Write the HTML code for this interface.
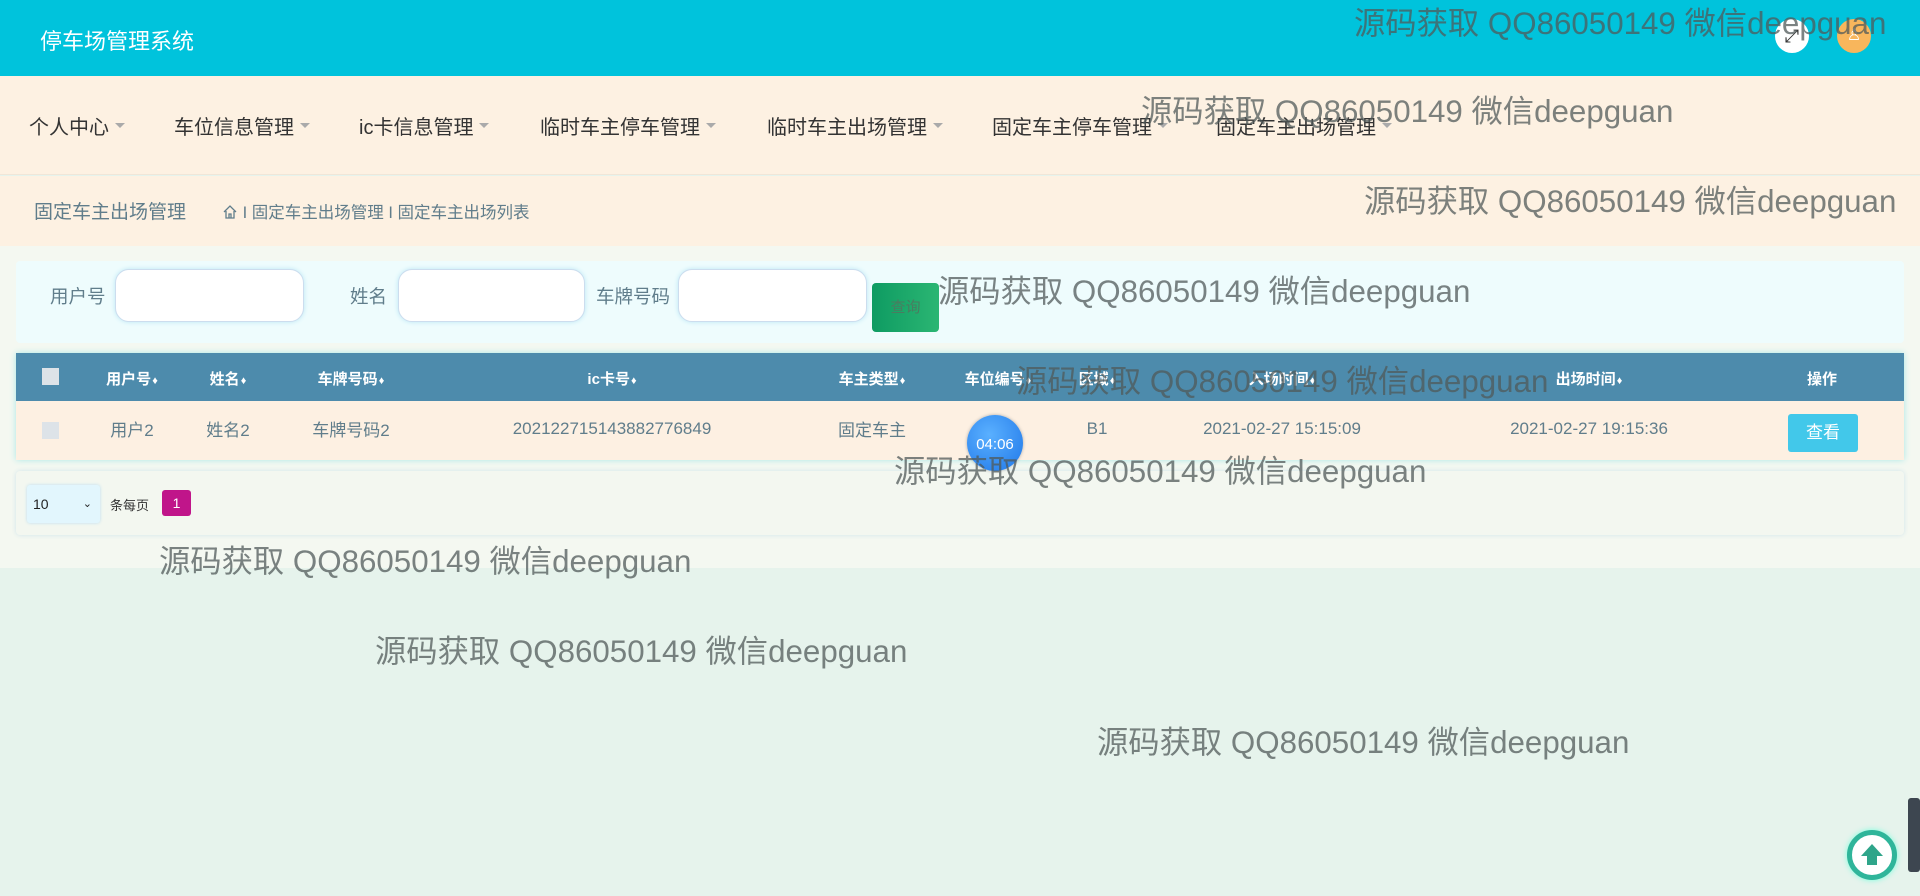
<!DOCTYPE html>
<html><head><meta charset="utf-8"><style>
*{box-sizing:border-box;margin:0;padding:0}
body{width:1920px;height:896px;position:relative;overflow:hidden;background:#e6f3ec;font-family:"Liberation Sans","Noto Sans CJK SC",sans-serif;}
.abs{position:absolute}
.header{left:0;top:0;width:1920px;height:76px;background:#00c3dc;box-shadow:0 2px 4px rgba(0,0,0,.15)}
.title{left:40px;top:24px;color:#fff;font-size:22px}
.nav{left:0;top:76px;width:1920px;height:99px;background:#fdf1e2;border-bottom:1px solid #f0e6d8}
.nav span{position:absolute;top:35px;font-size:20px;color:#333;white-space:nowrap}
.nav span:after{content:"";display:inline-block;margin-left:6px;vertical-align:middle;border-left:5px solid transparent;border-right:5px solid transparent;border-top:5px solid #aaa;position:relative;top:-3px}
.bc{left:0;top:176px;width:1920px;height:70px;background:#fdf1e2}
.light{left:0;top:246px;width:1920px;height:322px;background:#f4f8f1}
.search{left:16px;top:261px;width:1888px;height:82px;background:#eefcfd;border-radius:4px}
.lbl{font-size:18.5px;color:#607d8b;top:283px}
.inp{top:269px;height:53px;background:#fff;border-radius:14px;box-shadow:0 0 5px #b9e6f5;border:1px solid #cde}
.btn{left:872px;top:283px;width:67px;height:49px;border-radius:4px;background:linear-gradient(90deg,#0e9b62,#2bb673);color:#4a7c60;font-size:15px;text-align:center;line-height:49px}
.tbl{left:16px;top:353px;width:1888px;height:107px;box-shadow:0 0 6px #a8e8e6}
.th{position:absolute;top:0;left:0;width:1888px;height:48px;background:#4d8bac}
.tr{position:absolute;top:48px;left:0;width:1888px;height:59px;background:#fdf0e2}
.c{position:absolute;transform:translateX(-50%);white-space:nowrap}
.th .c{top:15px;color:#fff;font-size:15px;font-weight:bold}
.tr .c{top:15px;color:#607d8b;font-size:17px}
.s:after{content:"\2666";font-size:11px;margin-left:1px}
.cb{position:absolute;width:17px;height:17px;background:#dde3e8}
.pg{left:16px;top:471px;width:1888px;height:64px;background:#f3f7f0;border-radius:4px;box-shadow:0 0 5px #cfe3ea}
.wm{position:absolute;font-size:31.3px;color:rgba(80,90,90,.75);white-space:nowrap;font-family:"Liberation Sans","Noto Sans CJK SC",sans-serif}
</style></head><body>
<div class="abs header"></div>
<div class="abs title">停车场管理系统</div>
<div class="abs" style="left:1775px;top:19px;width:34px;height:34px;border-radius:50%;background:#fff;text-align:center;line-height:34px;font-size:18px;color:#333">⤢</div>
<div class="abs" style="left:1837px;top:19px;width:34px;height:34px;border-radius:50%;background:#f8b65c;text-align:center;line-height:34px;font-size:16px;color:#fff">♙</div>
<div class="abs nav">
<span style="left:29px">个人中心</span><span style="left:174px">车位信息管理</span><span style="left:359px">ic卡信息管理</span><span style="left:540px">临时车主停车管理</span><span style="left:767px">临时车主出场管理</span><span style="left:992px">固定车主停车管理</span><span style="left:1216px">固定车主出场管理</span>
</div>
<div class="abs bc"></div>
<div class="abs" style="left:34px;top:197px;font-size:19px;color:#607d8b">固定车主出场管理</div>
<div class="abs" style="left:222px;top:199px;font-size:16.5px;color:#607d8b"><svg width="16" height="16" viewBox="0 0 16 16" style="vertical-align:-2px"><path d="M2 8L8 2l6 6M4 7v7h8V7M7 14v-4h2v4" fill="none" stroke="#607d8b" stroke-width="1.3"/></svg> I 固定车主出场管理 I 固定车主出场列表</div>
<div class="abs light"></div>
<div class="abs search"></div>
<div class="abs lbl" style="left:50px">用户号</div>
<div class="abs inp" style="left:115px;width:189px"></div>
<div class="abs lbl" style="left:350px">姓名</div>
<div class="abs inp" style="left:398px;width:187px"></div>
<div class="abs lbl" style="left:596px">车牌号码</div>
<div class="abs inp" style="left:678px;width:189px"></div>
<div class="abs btn">查询</div>
<div class="abs tbl">
<div class="th">
<div class="cb" style="left:26px;top:15px"></div>
<div class="c s" style="left:116px">用户号</div><div class="c s" style="left:212px">姓名</div><div class="c s" style="left:335px">车牌号码</div><div class="c s" style="left:596px">ic卡号</div><div class="c s" style="left:856px">车主类型</div><div class="c s" style="left:982px">车位编号</div><div class="c s" style="left:1081px">区域</div><div class="c s" style="left:1266px">入场时间</div><div class="c s" style="left:1573px">出场时间</div><div class="c" style="left:1806px">操作</div>
</div>
<div class="tr">
<div class="cb" style="left:26px;top:21px"></div>
<div class="c" style="left:116px">用户2</div><div class="c" style="left:212px">姓名2</div><div class="c" style="left:335px">车牌号码2</div><div class="c" style="left:596px;top:18px">202122715143882776849</div><div class="c" style="left:856px">固定车主</div><div class="c" style="left:1081px;top:18px">B1</div><div class="c" style="left:1266px;top:18px">2021-02-27 15:15:09</div><div class="c" style="left:1573px;top:18px">2021-02-27 19:15:36</div>
<div style="position:absolute;left:1772px;top:13px;width:70px;height:38px;background:#42c8ea;border-radius:3px;color:#fff;font-size:17px;text-align:center;line-height:38px">查看</div>
</div>
</div>
<div class="abs pg"></div>
<div class="abs" style="left:27px;top:485px;width:73px;height:38px;background:#e2f6fd;border-radius:3px;box-shadow:0 0 3px #bde;font-size:14px;line-height:38px;padding-left:6px;color:#222">10<span style="position:absolute;right:8px;font-size:11px">⌄</span></div>
<div class="abs" style="left:110px;top:495px;font-size:13px;color:#333">条每页</div>
<div class="abs" style="left:162px;top:490px;width:29px;height:26px;background:#c0158a;border-radius:3px;color:#fff;font-size:14px;text-align:center;line-height:26px">1</div>
<div class="abs" style="left:967px;top:415px;width:56px;height:56px;border-radius:50%;background:radial-gradient(circle at 40% 35%,#5ab0ff,#1f77e8);box-shadow:0 0 3px #aaa;color:#fff;font-size:15px;text-align:center;line-height:60px">04:06</div>
<div class="abs" style="left:1847px;top:830px;width:50px;height:50px;border-radius:50%;background:#fff;border:5px solid #2fb59a;box-shadow:0 0 6px #7fd"><svg width="40" height="40" viewBox="0 0 40 40"><path d="M20 9L31 21h-6v9h-10v-9H9z" fill="#2fa58a"/></svg></div>
<div class="abs" style="left:1908px;top:798px;width:12px;height:74px;background:#3d4650;border-radius:3px"></div>
<div class="wm" style="left:1354px;top:-1px">源码获取 QQ86050149 微信deepguan</div>
<div class="wm" style="left:1141px;top:87px">源码获取 QQ86050149 微信deepguan</div>
<div class="wm" style="left:1364px;top:177px">源码获取 QQ86050149 微信deepguan</div>
<div class="wm" style="left:938px;top:267px">源码获取 QQ86050149 微信deepguan</div>
<div class="wm" style="left:1016px;top:357px">源码获取 QQ86050149 微信deepguan</div>
<div class="wm" style="left:894px;top:447px">源码获取 QQ86050149 微信deepguan</div>
<div class="wm" style="left:159px;top:537px">源码获取 QQ86050149 微信deepguan</div>
<div class="wm" style="left:375px;top:627px">源码获取 QQ86050149 微信deepguan</div>
<div class="wm" style="left:1097px;top:718px">源码获取 QQ86050149 微信deepguan</div>
</body></html>
